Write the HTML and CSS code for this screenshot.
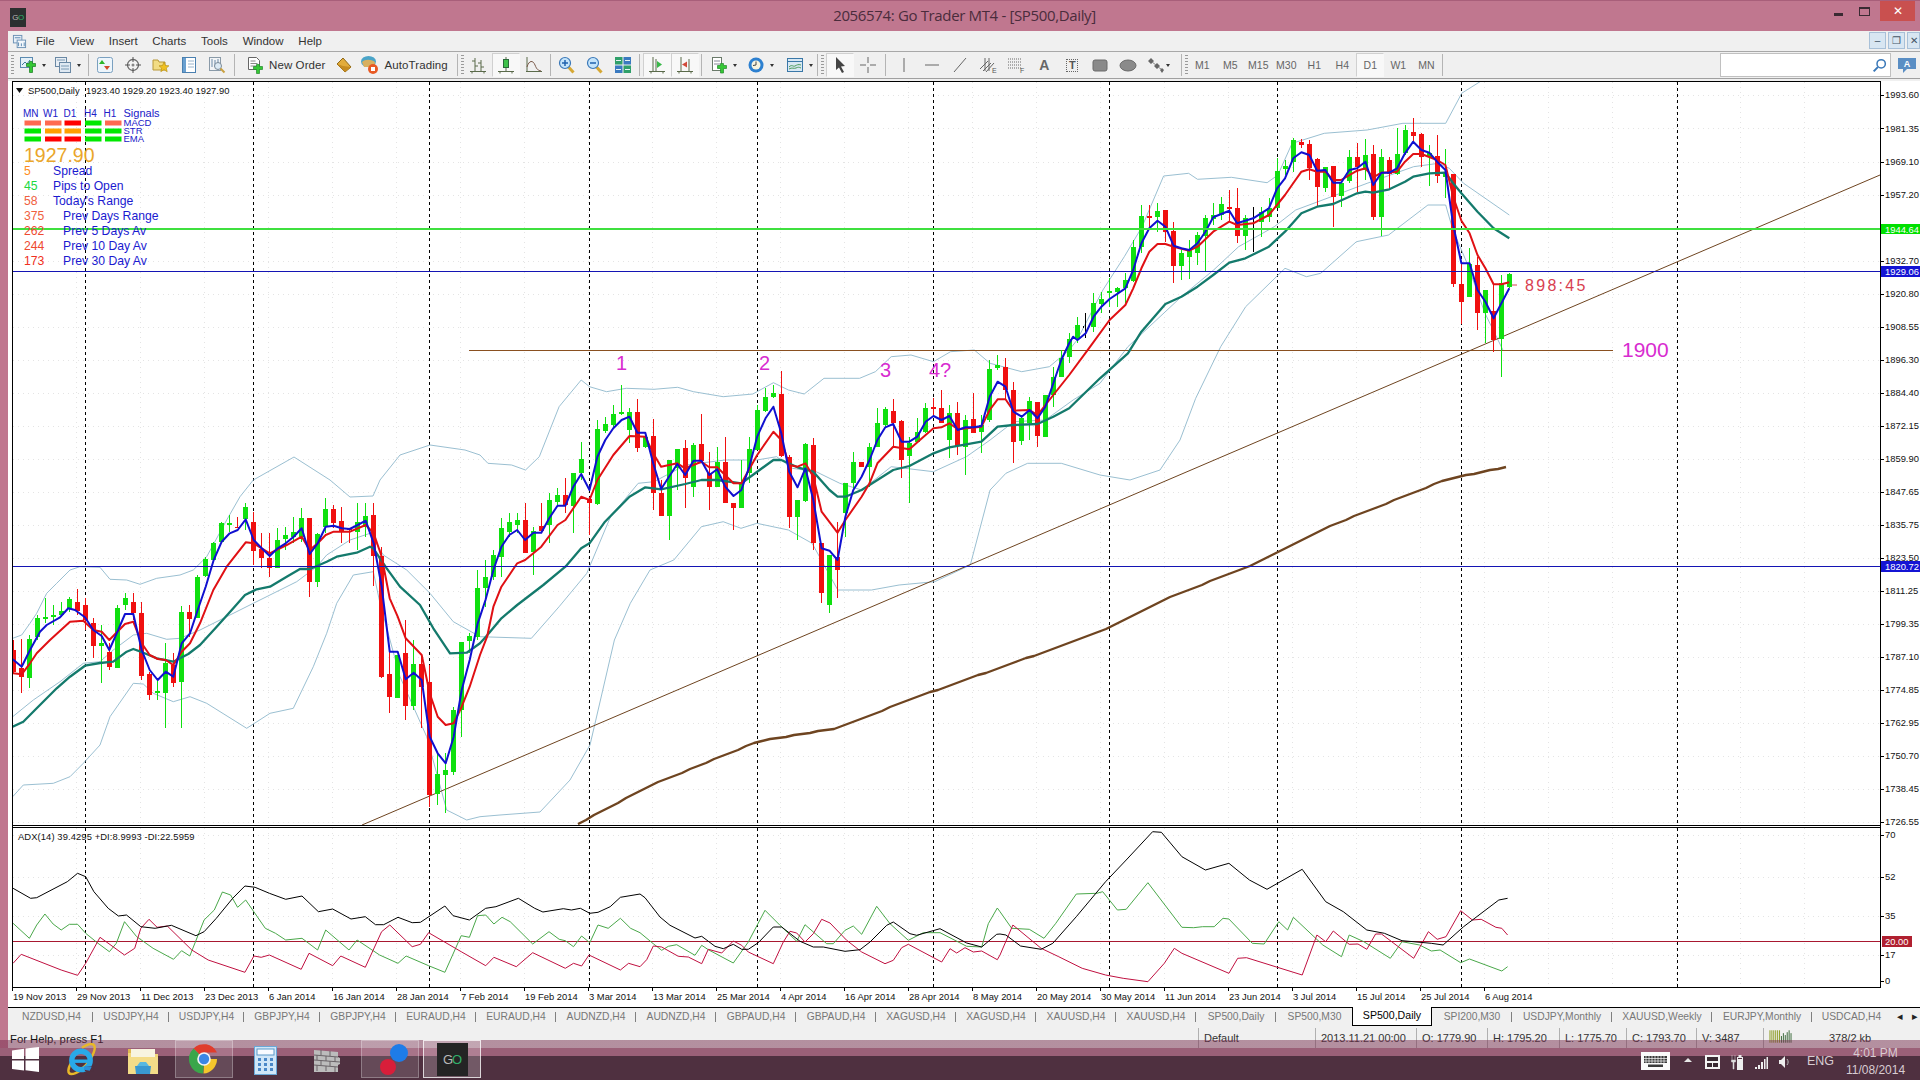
FILE: index.html
```html
<!DOCTYPE html>
<html lang="en">
<head>
<meta charset="utf-8">
<title>2056574: Go Trader MT4 - [SP500,Daily]</title>
<link rel="stylesheet" href="styles.css">
</head>
<body>
<svg class="defs" aria-hidden="true">
  <defs>
    <symbol id="i-new" viewBox="0 0 18 18"><rect x="1.500" y="1.500" width="12" height="10" fill="#e4f0f8" stroke="#5b8ab0"/><path d="M3 9l3-3 2 2 3-4" stroke="#3d7a9a" fill="none"/><path d="M7.500 7.500h3v-2h3v2h3v3h-3v6h-3v-6h-3z" fill="#35c835" stroke="#24862c" stroke-width=".8"/></symbol>
    <symbol id="i-profile" viewBox="0 0 18 18"><rect x="1.500" y="1.500" width="11" height="9" fill="#e8eef4" stroke="#6a88a4"/><rect x="5.500" y="6.500" width="11" height="10" fill="#dfe9f2" stroke="#6a88a4"/><path d="M7 10h8M7 13h8M3 4h8" stroke="#7a9ab4"/></symbol>
    <symbol id="i-market" viewBox="0 0 18 18"><rect x="1.500" y="1.500" width="15" height="15" rx="2" fill="#edf5fb" stroke="#7aa0c0"/><path d="M6 4l3 4H3z" fill="#2cb62c"/><path d="M8 10h6l-3 4z" fill="#d04a2a"/></symbol>
    <symbol id="i-nav" viewBox="0 0 18 18"><circle cx="9" cy="9" r="5.500" fill="#f4f4f4" stroke="#6a6a6a" stroke-width="1.300"/><path d="M9 1v5M9 12v5M1 9h5M12 9h5" stroke="#555"/><circle cx="9" cy="9" r="1.500" fill="#888"/></symbol>
    <symbol id="i-star" viewBox="0 0 18 18"><path d="M1 4h5l1 2h6v8H1z" fill="#f2dc84" stroke="#b89838"/><path d="M12 6l1.500 3.500 3.500.3-2.700 2.300.9 3.600-3.200-2-3.200 2 .9-3.600L7 9.800l3.500-.3z" fill="#f0c020" stroke="#b08a10" stroke-width=".6"/></symbol>
    <symbol id="i-note" viewBox="0 0 18 18"><rect x="2.500" y="1.500" width="13" height="15" fill="#fff" stroke="#4a80b0"/><rect x="3" y="2" width="3" height="14" fill="#6aa0d0"/><path d="M8 5h6M8 8h6M8 11h6" stroke="#9ab4cc"/></symbol>
    <symbol id="i-tester" viewBox="0 0 18 18"><rect x="1.500" y="1.500" width="11" height="13" fill="#f2f4f6" stroke="#8a9aa8"/><path d="M4 3v8M7 4v7M10 3v6" stroke="#6a8aa8"/><circle cx="10" cy="10" r="3.500" fill="#dceaf5" stroke="#7a8a98"/><path d="M12.500 12.500l4 4" stroke="#c9a040" stroke-width="2"/></symbol>
    <symbol id="i-order" viewBox="0 0 18 18"><path d="M2.500 1.500h8l3 3v9h-11z" fill="#fff" stroke="#666"/><path d="M4.500 5h5M4.500 7.500h7M4.500 10h7" stroke="#888"/><path d="M7.500 10.500h3v-2h3v2h3v3h-3v4h-3v-4h-3z" fill="#35c835" stroke="#24862c" stroke-width=".7"/></symbol>
    <symbol id="i-gold" viewBox="0 0 18 18"><path d="M2 8l6-6 8 9-6 5z" fill="#e2ac3c" stroke="#8e6818"/><path d="M2 8l8 8 6-5-8-1z" fill="#c68c22"/></symbol>
    <symbol id="i-auto" viewBox="0 0 20 20"><ellipse cx="8.500" cy="6.500" rx="7.500" ry="5.500" fill="#4aa4c8"/><path d="M2 7c3-3 9-3 13 0l-1 5H4z" fill="#d8b060"/><circle cx="13" cy="14" r="5" fill="#e85a24"/><rect x="11" y="12" width="4" height="4" fill="#fff"/></symbol>
    <symbol id="i-bars" viewBox="0 0 18 18"><path d="M6 2v13M3 5h3M6 10h3M12 4v11M9 7h3M12 11h3M1 15.500h16M3 15.500v2M15 15.500v2" stroke="#5a6a4a" fill="none"/></symbol>
    <symbol id="i-candle" viewBox="0 0 18 18"><path d="M9 1v14M1 15.500h16M3 15.500v2M15 15.500v2" stroke="#5a6a4a" fill="none"/><rect x="6.500" y="3.500" width="5" height="8" fill="#3ec24a" stroke="#2a6a3a"/></symbol>
    <symbol id="i-line" viewBox="0 0 18 18"><path d="M2 1v15M1 15.500h16" stroke="#5a6a4a" fill="none"/><path d="M2 11c2-7 6-7 8-2s3 5 6 6" stroke="#7a5a4a" fill="none"/></symbol>
    <symbol id="i-zin" viewBox="0 0 18 18"><path d="M10.500 11l5 5.500" stroke="#d6a834" stroke-width="3"/><circle cx="7" cy="7" r="5.500" fill="#c4e4fa" stroke="#3a78b8" stroke-width="1.200"/><path d="M4 7h6M7 4v6" stroke="#1f62ae" stroke-width="1.500"/></symbol>
    <symbol id="i-zout" viewBox="0 0 18 18"><path d="M10.500 11l5 5.500" stroke="#d6a834" stroke-width="3"/><circle cx="7" cy="7" r="5.500" fill="#c4e4fa" stroke="#3a78b8" stroke-width="1.200"/><path d="M4 7h6" stroke="#1f62ae" stroke-width="1.500"/></symbol>
    <symbol id="i-tile" viewBox="0 0 18 18"><rect x="1" y="1" width="7.500" height="7.500" fill="#2fa06a"/><rect x="9.500" y="1" width="7.500" height="7.500" fill="#3a7ac0"/><rect x="1" y="9.500" width="7.500" height="7.500" fill="#3a7ac0"/><rect x="9.500" y="9.500" width="7.500" height="7.500" fill="#2fa06a"/><path d="M2 4.500h5M11 4.500h5M2 13.500h5M11 13.500h5" stroke="#e6f2f2"/></symbol>
    <symbol id="i-scroll" viewBox="0 0 18 18"><path d="M5 1v15M1 15.500h16M8 3v12M3 15.500v2M15 15.500v2" stroke="#5a6a4a" fill="none"/><path d="M9 5l5 3.500L9 12z" fill="#38b848"/></symbol>
    <symbol id="i-shift" viewBox="0 0 18 18"><path d="M5 1v15M1 15.500h16M13 3v12M3 15.500v2M15 15.500v2" stroke="#5a6a4a" fill="none"/><path d="M6 8.500l5-3v6z" fill="#d04a3a"/></symbol>
    <symbol id="i-ind" viewBox="0 0 18 18"><rect x="2.500" y="1.500" width="9" height="13" fill="#fff" stroke="#6a7a6a"/><path d="M4 5h6M4 8h6" stroke="#889"/><path d="M7.500 9.500h3v-2h3v2h3v3h-3v4.500h-3V12.500h-3z" fill="#35c835" stroke="#24862c" stroke-width=".7"/></symbol>
    <symbol id="i-clock" viewBox="0 0 18 18"><circle cx="9" cy="9" r="7.500" fill="#2d80d0"/><circle cx="9" cy="9" r="4.500" fill="#f8f4e0"/><path d="M9 5.500V9l-3 .5" stroke="#444" fill="none"/></symbol>
    <symbol id="i-tmpl" viewBox="0 0 18 18"><rect x="1.500" y="2.500" width="15" height="13" fill="#d8e8f4" stroke="#3a78a8"/><path d="M1.500 5.500h15" stroke="#3a78a8"/><path d="M3 11c3-3 4 0 6-1s3-2 6-1M3 13c3-2 5 0 7-1s3-1 5 0" stroke="#4a9a5a" fill="none"/></symbol>
    <symbol id="i-cursor" viewBox="0 0 18 18"><path d="M5 1l9 9-4 .5 3 5.500-2 1-3-5.500L5 14z" fill="#444"/></symbol>
    <symbol id="i-cross" viewBox="0 0 18 18"><path d="M9 1v6M9 11v6M1 9h6M11 9h6" stroke="#666"/></symbol>
    <symbol id="i-vline" viewBox="0 0 18 18"><path d="M9 2v14" stroke="#666"/></symbol>
    <symbol id="i-hline" viewBox="0 0 18 18"><path d="M2 9h14" stroke="#666"/></symbol>
    <symbol id="i-tline" viewBox="0 0 18 18"><path d="M3 16L15 2" stroke="#666"/></symbol>
    <symbol id="i-rect" viewBox="0 0 18 18"><rect x="2" y="4" width="14" height="11" rx="2" fill="#8a8a8a" stroke="#6a6a6a"/></symbol>
    <symbol id="i-ellipse" viewBox="0 0 18 18"><ellipse cx="9" cy="9.500" rx="8" ry="5.500" fill="#8a8a8a" stroke="#6a6a6a"/></symbol>
    <symbol id="i-arrows" viewBox="0 0 18 18"><path d="M4 2l3 3-3 3-3-3zM10 7l3 3-3 3-3-3zM15 12l2 2-2 3-2-3z" fill="#666"/><path d="M5 6l4 3M11 11l3 2" stroke="#888"/></symbol>
    <symbol id="i-search" viewBox="0 0 18 18"><circle cx="11" cy="7" r="5" fill="none" stroke="#3a78b8" stroke-width="1.800"/><path d="M7 11l-5 5" stroke="#3a78b8" stroke-width="2.400"/></symbol>
  </defs>
</svg>

<header class="titlebar">
  <div class="app-icon"><span class="app-g">G</span><span class="app-o">O</span></div>
  <div class="title">2056574: Go Trader MT4 - [SP500,Daily]</div>
  <div class="winctl">
    <span class="wc-min"></span>
    <span class="wc-max"></span>
    <span class="wc-close">✕</span>
  </div>
</header>

<main class="window">
  <nav class="menubar">
    <svg class="menu-doc" viewBox="0 0 16 16"><rect x="1.500" y="1.500" width="9" height="8" fill="#e8f0f8" stroke="#6a90b4"/><rect x="5.500" y="6.500" width="9" height="8" fill="#f4f8fc" stroke="#6a90b4"/><path d="M3 4h6M7 9v4M10 10v3M13 9v4" stroke="#5a88b0"/></svg>
    <span class="m m-file">File</span>
    <span class="m">View</span>
    <span class="m">Insert</span>
    <span class="m">Charts</span>
    <span class="m">Tools</span>
    <span class="m">Window</span>
    <span class="m">Help</span>
    <div class="mdi">
      <span class="mdi-b">–</span>
      <span class="mdi-b">❐</span>
      <span class="mdi-b mdi-last">✕</span>
    </div>
  </nav>

  <div class="toolbar">
    <i class="grip ml3"></i>
    <span class="b b26 ml1"><svg class="i"><use href="#i-new"/></svg></span><i class="caret"></i>
    <span class="b b26 ml4"><svg class="i"><use href="#i-profile"/></svg></span><i class="caret"></i>
    <i class="sep ml7"></i>
    <span class="b ml2"><svg class="i"><use href="#i-market"/></svg></span>
    <span class="b"><svg class="i"><use href="#i-nav"/></svg></span>
    <span class="b"><svg class="i"><use href="#i-star"/></svg></span>
    <span class="b"><svg class="i"><use href="#i-note"/></svg></span>
    <span class="b"><svg class="i"><use href="#i-tester"/></svg></span>
    <i class="sep ml3"></i>
    <span class="tbtn ml11"><svg class="i"><use href="#i-order"/></svg>New Order</span>
    <span class="b ml4"><svg class="i"><use href="#i-gold"/></svg></span>
    <span class="tbtn ml2"><svg class="i i20"><use href="#i-auto"/></svg>AutoTrading</span>
    <i class="sep ml9"></i>
    <i class="grip ml3"></i>
    <span class="b"><svg class="i"><use href="#i-bars"/></svg></span>
    <span class="b on"><svg class="i"><use href="#i-candle"/></svg></span>
    <span class="b"><svg class="i"><use href="#i-line"/></svg></span>
    <i class="sep ml2"></i>
    <span class="b ml2"><svg class="i"><use href="#i-zin"/></svg></span>
    <span class="b"><svg class="i"><use href="#i-zout"/></svg></span>
    <span class="b"><svg class="i"><use href="#i-tile"/></svg></span>
    <i class="sep ml2"></i>
    <span class="b on ml3"><svg class="i"><use href="#i-scroll"/></svg></span>
    <span class="b on"><svg class="i"><use href="#i-shift"/></svg></span>
    <i class="sep ml2"></i>
    <span class="b b26 ml4"><svg class="i"><use href="#i-ind"/></svg></span><i class="caret"></i>
    <span class="b b26 ml6"><svg class="i"><use href="#i-clock"/></svg></span><i class="caret"></i>
    <span class="b b26 ml8"><svg class="i"><use href="#i-tmpl"/></svg></span><i class="caret"></i>
    <i class="sep ml4"></i>
    <i class="grip ml3"></i>
    <span class="b on ml2"><svg class="i"><use href="#i-cursor"/></svg></span>
    <span class="b"><svg class="i"><use href="#i-cross"/></svg></span>
    <i class="sep ml3"></i>
    <span class="b ml4"><svg class="i"><use href="#i-vline"/></svg></span>
    <span class="b"><svg class="i"><use href="#i-hline"/></svg></span>
    <span class="b"><svg class="i"><use href="#i-tline"/></svg></span>
    <span class="b"><svg class="i" viewBox="0 0 18 18"><path d="M1 13l8-8M4 15l8-8M7 16l8-9M6 2v13M10 2v13" stroke="#666" fill="none"/><text x="13" y="17" class="mini">E</text></svg></span>
    <span class="b"><svg class="i" viewBox="0 0 18 18"><path d="M1 3h13M1 6h13M1 9h13M1 12h13" stroke="#666" stroke-dasharray="1 1"/><text x="13" y="17" class="mini">F</text></svg></span>
    <span class="b lett">A</span>
    <span class="b"><span class="tbox">T</span></span>
    <span class="b"><svg class="i"><use href="#i-rect"/></svg></span>
    <span class="b"><svg class="i"><use href="#i-ellipse"/></svg></span>
    <span class="b"><svg class="i"><use href="#i-arrows"/></svg></span><i class="caret cl"></i>
    <i class="sep ml10"></i>
    <i class="grip ml3"></i>
    <span class="b tf">M1</span>
    <span class="b tf">M5</span>
    <span class="b tf">M15</span>
    <span class="b tf">M30</span>
    <span class="b tf">H1</span>
    <span class="b tf">H4</span>
    <span class="b tf on">D1</span>
    <span class="b tf">W1</span>
    <span class="b tf">MN</span>
    <i class="sep ml2"></i>
    <div class="search"><svg class="i s-ic"><use href="#i-search"/></svg></div>
    <svg class="bubble" viewBox="0 0 20 18"><path d="M1 2h18v11h-9l-4 4v-4H1z" fill="#5a8ec4"/><text x="10" y="11" class="bubble-t">A</text></svg>
  </div>

  <svg class="chart" viewBox="8 79 1912 928" xmlns="http://www.w3.org/2000/svg">
    <defs>
      <clipPath id="clip-main"><rect x="13" y="82" width="1867" height="743"/></clipPath>
      <clipPath id="clip-sub"><rect x="13" y="828" width="1867" height="159"/></clipPath>
    </defs>
    <rect class="c-bg" x="8" y="79" width="1912" height="928"/>
    <rect class="c-strip" x="8" y="79" width="1912" height="2"/>
    <g id="grid"></g>
    <g clip-path="url(#clip-main)">
      <g id="bands"></g>
      <path class="ln-1900" d="M469 350.500H1613"/>
      <path class="ln-trend" d="M362 825L1880 175"/>
      <g id="candles"></g>
      <g id="mas"></g>
      <path class="ln-green" d="M13 229H1880"/>
      <path class="ln-blue" d="M13 271.500H1880M13 566.500H1880"/>
      <path class="ln-timer" d="M1512 285H1517"/>
    </g>
    <g clip-path="url(#clip-sub)">
      <path class="ln-level" d="M13 941.500H1880"/>
      <g id="adx"></g>
    </g>
    <path class="frame" d="M12.500 81.500H1880.500V987.500H12.500ZM12.500 825.500H1880.500M12.500 827.500H1880.500"/>
    <path class="frame" id="ticks" d="M1880 95h4M1880 128h4M1880 162h4M1880 195h4M1880 261h4M1880 294h4M1880 327h4M1880 360h4M1880 393h4M1880 426h4M1880 459h4M1880 492h4M1880 525h4M1880 558h4M1880 591h4M1880 624h4M1880 657h4M1880 690h4M1880 723h4M1880 756h4M1880 789h4M1880 822h4M1880 835h4M1880 877h4M1880 916h4M1880 955h4M1880 981h4"/>

    <g class="ax">
      <text x="1885" y="98">1993.60</text><text x="1885" y="131.500">1981.35</text><text x="1885" y="165">1969.10</text><text x="1885" y="198">1957.20</text>
      <text x="1885" y="264">1932.70</text><text x="1885" y="297">1920.80</text><text x="1885" y="330">1908.55</text><text x="1885" y="363">1896.30</text>
      <text x="1885" y="396">1884.40</text><text x="1885" y="429">1872.15</text><text x="1885" y="462">1859.90</text><text x="1885" y="495">1847.65</text>
      <text x="1885" y="528">1835.75</text><text x="1885" y="561">1823.50</text><text x="1885" y="594">1811.25</text><text x="1885" y="627">1799.35</text>
      <text x="1885" y="660">1787.10</text><text x="1885" y="693">1774.85</text><text x="1885" y="726">1762.95</text><text x="1885" y="759">1750.70</text>
      <text x="1885" y="792">1738.45</text><text x="1885" y="825">1726.55</text>
      <text x="1885" y="838">70</text><text x="1885" y="880">52</text><text x="1885" y="919">35</text><text x="1885" y="958">17</text><text x="1885" y="984">0</text>
    </g>

    <rect class="tag-green" x="1881" y="224" width="39" height="10"/><text class="tag-t" x="1885" y="232.500">1944.64</text>
    <rect class="tag-blue" x="1881" y="266" width="39" height="11"/><text class="tag-t" x="1885" y="275">1929.06</text>
    <rect class="tag-blue" x="1881" y="561" width="39" height="11"/><text class="tag-t" x="1885" y="570">1820.72</text>
    <rect class="tag-red" x="1882" y="936" width="30" height="11"/><text class="tag-t" x="1885" y="945">20.00</text>

    <g class="ax">
      <text x="13" y="999.500">19 Nov 2013</text><text x="77" y="999.500">29 Nov 2013</text><text x="141" y="999.500">11 Dec 2013</text><text x="205" y="999.500">23 Dec 2013</text>
      <text x="269" y="999.500">6 Jan 2014</text><text x="333" y="999.500">16 Jan 2014</text><text x="397" y="999.500">28 Jan 2014</text><text x="461" y="999.500">7 Feb 2014</text>
      <text x="525" y="999.500">19 Feb 2014</text><text x="589" y="999.500">3 Mar 2014</text><text x="653" y="999.500">13 Mar 2014</text><text x="717" y="999.500">25 Mar 2014</text>
      <text x="781" y="999.500">4 Apr 2014</text><text x="845" y="999.500">16 Apr 2014</text><text x="909" y="999.500">28 Apr 2014</text><text x="973" y="999.500">8 May 2014</text>
      <text x="1037" y="999.500">20 May 2014</text><text x="1101" y="999.500">30 May 2014</text><text x="1165" y="999.500">11 Jun 2014</text><text x="1229" y="999.500">23 Jun 2014</text>
      <text x="1293" y="999.500">3 Jul 2014</text><text x="1357" y="999.500">15 Jul 2014</text><text x="1421" y="999.500">25 Jul 2014</text><text x="1485" y="999.500">6 Aug 2014</text>
    </g>

    <g class="ax">
      <text x="28" y="93.500">SP500,Daily</text><text x="86" y="93.500">1923.40 1929.20 1923.40 1927.90</text>
      <text class="ax-adx" x="18" y="840">ADX(14) 39.4295 +DI:8.9993 -DI:22.5959</text>
    </g>
    <path class="tri" d="M16 88h7l-3.500 5z"/>

    <g class="sig">
      <text x="23" y="117">MN</text><text x="43" y="117">W1</text><text x="63.500" y="117">D1</text><text x="84" y="117">H4</text><text x="103.500" y="117">H1</text>
    </g>
    <text class="sig-head" x="123.500" y="116.500">Signals</text>
    <g class="sig-row">
      <text x="123.500" y="126">MACD</text><text x="123.500" y="134">STR</text><text x="123.500" y="142">EMA</text>
    </g>
    <g class="bars-sig">
      <rect class="b-sal" x="24.500" y="120.500" width="16.500" height="5"/><rect class="b-sal" x="45" y="120.500" width="16.500" height="5"/><rect class="b-red" x="64.500" y="120.500" width="16.500" height="5"/><rect class="b-lim" x="85" y="120.500" width="16.500" height="5"/><rect class="b-sal" x="105" y="120.500" width="16.500" height="5"/>
      <rect class="b-lim" x="24.500" y="128.500" width="16.500" height="5"/><rect class="b-org" x="45" y="128.500" width="16.500" height="5"/><rect class="b-org" x="64.500" y="128.500" width="16.500" height="5"/><rect class="b-lim" x="85" y="128.500" width="16.500" height="5"/><rect class="b-lim" x="105" y="128.500" width="16.500" height="5"/>
      <rect class="b-lim" x="24.500" y="136.500" width="16.500" height="5"/><rect class="b-red" x="45" y="136.500" width="16.500" height="5"/><rect class="b-red" x="64.500" y="136.500" width="16.500" height="5"/><rect class="b-lim" x="85" y="136.500" width="16.500" height="5"/><rect class="b-lim" x="105" y="136.500" width="16.500" height="5"/>
    </g>
    <text class="big-price" x="24" y="162">1927.90</text>
    <g class="stat">
      <text class="v-org" x="24" y="174.500">5</text><text x="53" y="174.500">Spread</text>
      <text class="v-lim" x="24" y="189.500">45</text><text x="53" y="189.500">Pips to Open</text>
      <text class="v-tom" x="24" y="204.500">58</text><text x="53" y="204.500">Today's Range</text>
      <text class="v-tom" x="24" y="219.500">375</text><text x="63" y="219.500">Prev Days Range</text>
      <text class="v-tom2" x="24" y="234.500">262</text><text x="63" y="234.500">Prev 5 Days Av</text>
      <text class="v-tom2" x="24" y="249.500">244</text><text x="63" y="249.500">Prev 10 Day Av</text>
      <text class="v-red" x="24" y="264.500">173</text><text x="63" y="264.500">Prev 30 Day Av</text>
    </g>

    <g class="note-t">
      <text x="616" y="370">1</text><text x="759" y="370">2</text><text x="880" y="377">3</text><text x="929" y="377">4?</text><text class="note-lg" x="1622" y="357">1900</text>
    </g>
    <text class="timer" x="1525" y="291">898:45</text>
  </svg>

  <div class="tabs">
    <span class="tab">NZDUSD,H4</span>
    <span class="tab">USDJPY,H4</span>
    <span class="tab">USDJPY,H4</span>
    <span class="tab">GBPJPY,H4</span>
    <span class="tab">GBPJPY,H4</span>
    <span class="tab">EURAUD,H4</span>
    <span class="tab">EURAUD,H4</span>
    <span class="tab">AUDNZD,H4</span>
    <span class="tab">AUDNZD,H4</span>
    <span class="tab">GBPAUD,H4</span>
    <span class="tab">GBPAUD,H4</span>
    <span class="tab">XAGUSD,H4</span>
    <span class="tab">XAGUSD,H4</span>
    <span class="tab">XAUUSD,H4</span>
    <span class="tab">XAUUSD,H4</span>
    <span class="tab">SP500,Daily</span>
    <span class="tab tab-plain">SP500,M30</span>
    <span class="tab tab-on">SP500,Daily</span>
    <span class="tab">SPI200,M30</span>
    <span class="tab">USDJPY,Monthly</span>
    <span class="tab">XAUUSD,Weekly</span>
    <span class="tab">EURJPY,Monthly</span>
    <span class="tab tab-plain">USDCAD,H4</span>
    <span class="tab-arrows"><i>◂</i><i>▸</i></span>
  </div>

  <div class="status">
    <span class="s-first">For Help, press F1</span>
    <span class="s-c">Default</span>
    <span class="s-c">2013.11.21 00:00</span>
    <span class="s-c">O: 1779.90</span>
    <span class="s-c">H: 1795.20</span>
    <span class="s-c">L: 1775.70</span>
    <span class="s-c">C: 1793.70</span>
    <span class="s-c">V: 3487</span>
    <span class="s-c s-net">
      <svg class="netbars" viewBox="0 0 24 13"><path d="M1 0v13M3 0v13M5 0v13M7 0v13M9 0v13M11 0v13" stroke="#8a9a20" stroke-width="1"/><path d="M13 6v7M15 3v10M17 5v8M19 2v11M21 0v13M23 3v10" stroke="#3a6a3a" stroke-width="1"/></svg>
      <span class="s-kb">378/2 kb</span>
    </span>
  </div>
</main>

<footer class="taskbar">
  <svg class="tk-win" viewBox="0 0 27 25"><path d="M0 3.500l12-1.700V12H0zM13.500 1.600L27 0v12H13.500zM0 13.500h12v10L0 22zM13.500 13.500H27V25l-13.500-1.800z" fill="#fff"/></svg>
  <svg class="tk-ie" viewBox="0 0 32 34"><path d="M6 20c-4 7-4 12 0 12 5 0 14-6 20-16S31 1 26 1c-3 0-6 2-9 4" fill="none" stroke="#e8b828" stroke-width="2.500"/><circle cx="16" cy="18" r="9.500" fill="none" stroke="#29a9e8" stroke-width="5.500"/><path d="M6 17h20v3.500H6z" fill="#29a9e8"/><path d="M20 24h9v5H20z" fill="#4f3040"/><path d="M20 23.500l7 1-2 4-6-1z" fill="#2a8fd8"/></svg>
  <svg class="tk-folder" viewBox="0 0 32 28"><path d="M1 5h11l2 2h17v20H1z" fill="#f2d678"/><rect x="1" y="2" width="12" height="4" fill="#e0b850"/><rect x="4" y="2" width="24" height="8" fill="#f8f4e0"/><path d="M1 10h30v17H1z" fill="#f4dc88"/><path d="M8 19h16l-1 8H9z" fill="#3a98d0"/><path d="M13 15h6l3 4H10z" fill="#58b8e0"/></svg>
  <span class="tk-btn tk-chrome">
    <svg class="tk-ico" viewBox="0 0 30 30"><path d="M15 15L4.500 4.500A14.500 14.500 0 0 1 28 8.500H15z" fill="#e03c2c"/><path d="M15 15H28a14.500 14.500 0 0 1-13.500 14.500z" fill="#f4c62c"/><path d="M15 15l-1 14.500A14.500 14.500 0 0 1 4.500 4.500z" fill="#3aa64a"/><circle cx="15" cy="15" r="6.800" fill="#f4f4f4"/><circle cx="15" cy="15" r="5.200" fill="#3c86e4"/></svg>
  </span>
  <svg class="tk-calc" viewBox="0 0 23 29"><rect x=".5" y=".5" width="22" height="28" fill="#cfe6f8" stroke="#6aa8d8"/><rect x="3" y="3" width="17" height="6" fill="#f8fbff" stroke="#5a98c8"/><path d="M4 12h3v3H4zM10 12h3v3h-3zM16 12h3v3h-3zM4 17h3v3H4zM10 17h3v3h-3zM16 17h3v3h-3zM4 22h3v3H4zM10 22h3v3h-3zM16 22h3v3h-3z" fill="#4a88c8"/></svg>
  <svg class="tk-wall" viewBox="0 0 28 26"><path d="M2 2l24 2v5l2 1v6l-2 1v7L2 24z" fill="#bcbcbc"/><path d="M2 7l24 2M2 12l26 2M2 17l24 2M9 2v5M18 3v5M5 7v5M14 8v5M23 9v5M9 12v5M18 13v5M5 17v6M14 18v5M23 19v5" stroke="#6a6468" stroke-width="1"/></svg>
  <span class="tk-btn tk-dots">
    <svg class="tk-dotsvg" viewBox="0 0 40 34"><circle cx="29" cy="11" r="9" fill="#1e7ce8"/><circle cx="18" cy="25" r="8" fill="#d81e3a"/></svg>
  </span>
  <span class="tk-btn tk-go">
    <span class="tk-goicon"><span class="app-g">G</span><span class="app-o">O</span></span>
  </span>
  <div class="tray">
    <svg class="tr-kb" viewBox="0 0 29 18"><rect width="29" height="18" fill="#fbfbfb"/><path d="M3 4h23v7H3z" fill="#3a3a3a"/><path d="M5 4v7M8 4v7M11 4v7M14 4v7M17 4v7M20 4v7M23 4v7M3 6.500h23M3 9h23" stroke="#fbfbfb" stroke-width=".7"/><rect x="7" y="12.500" width="15" height="2.500" fill="#3a3a3a"/></svg>
    <i class="tr-up"></i>
    <svg class="tr-box" viewBox="0 0 15 14"><rect width="15" height="14" fill="#f4f4f4"/><rect x="2" y="2" width="11" height="4" fill="#3a2a32"/><rect x="2" y="8" width="5" height="4" fill="#3a2a32"/><rect x="8" y="8" width="5" height="4" fill="#3a2a32"/></svg>
    <svg class="tr-pow" viewBox="0 0 12 17"><path d="M1 1v5M4 1v5M.5 6h4v2H3v7H2V8H.5z" fill="#ddd" stroke="#ddd" stroke-width=".5"/><rect x="6.500" y="3.500" width="5" height="12" fill="none" stroke="#eee"/><rect x="7.500" y="1" width="3" height="2.500" fill="#eee"/><rect x="7" y="5" width="4" height="10" fill="#eee"/></svg>
    <svg class="tr-sig" viewBox="0 0 13 12"><path d="M0 10h2v2H0zM3 8h2v4H3zM6 5h2v7H6zM9 2h1.500v10H9zM11.500 0H13v12h-1.500z" fill="#eee"/></svg>
    <svg class="tr-snd" viewBox="0 0 11 14"><path d="M0 5h2l4-4v12L2 9H0z" fill="#eee"/><path d="M8 4c1.500 2 1.500 4 0 6" stroke="#bbb" fill="none"/></svg>
    <span class="tr-lang">ENG</span>
    <span class="tr-clock"><span>4:01 PM</span><span>11/08/2014</span></span>
  </div>
</footer>
<script src="chart.js"></script>
</body>
</html>
```

FILE: styles.css
```css
* { box-sizing: border-box; }
html, body { margin: 0; padding: 0; }
body {
  width: 1920px; height: 1080px; overflow: hidden; position: relative;
  background: #c0778f;
  display: flex; flex-direction: column;
  font-family: "Liberation Sans", Arial, sans-serif;
  color: #222;
}
.defs { position: absolute; width: 0; height: 0; }

/* title bar */
.titlebar {
  height: 31px; flex: none; position: relative;
  display: flex; align-items: flex-start;
  border-top: 1px solid #a85f7a;
  padding-left: 10px;
}
.app-icon {
  width: 16px; height: 19px; margin-top: 7px; background: #2c2f2f;
  font-size: 8px; line-height: 19px; text-align: center; letter-spacing: -.5px; overflow: hidden;
}
.app-g { color: #b8b8b8; }
.app-o { color: #31b06a; }
.title {
  position: absolute; left: 0; right: 0; top: 4px; padding-left: 9px;
  text-align: center; font: 15px "Open Sans", "Liberation Sans", sans-serif; color: #4a2c3c;
  letter-spacing: -.35px;
}
.winctl { margin-left: auto; display: flex; align-items: flex-start; height: 21px; margin-right: 5px; }
.wc-min { width: 9px; height: 3px; background: #3a2a32; margin: 12px 16px 0 0; }
.wc-max { width: 11px; height: 9px; border: 1px solid #3a2a32; border-top-width: 2px; margin: 6px 10px 0 0; }
.wc-close { width: 35px; height: 20px; background: #c9504f; color: #fff; font-size: 12px; line-height: 20px; text-align: center; }

.window { margin-left: 8px; flex: 1; display: flex; flex-direction: column; min-height: 0; }

/* menu */
.menubar {
  height: 21px; flex: none; display: flex; align-items: center;
  background: #f0f0f0; border-bottom: 1px solid #a8a8a8; padding-left: 4px;
  font-size: 11.500px; color: #333; position: relative;
}
.menu-doc { width: 15px; height: 15px; }
.m { padding: 0 7.400px; }
.m-file { margin-left: 6px; padding-left: 3px; }
.mdi { margin-left: auto; display: flex; gap: 2px; align-self: flex-start; margin-top: 1px; }
.mdi-b {
  width: 17px; height: 17px; background: #d8e6f2; border: 1px solid #a8c0d8;
  font-size: 10px; line-height: 15px; text-align: center; color: #456;
}
.mdi-last { width: 13px; overflow: hidden; }

/* toolbar */
.toolbar {
  height: 27px; flex: none; display: flex; align-items: center;
  background: #f0f0f0; border-bottom: 1px solid #a0a0a0;
  font-size: 11.500px; color: #333;
}
.grip { width: 3px; height: 20px; flex: none; background: repeating-linear-gradient(#9a9a9a 0 1px, transparent 1px 3px); }
.sep { width: 1px; height: 22px; flex: none; background: #b4b4b4; }
.caret { width: 0; height: 0; flex: none; border: 2.500px solid transparent; border-top: 3px solid #333; border-bottom: 0; margin: 0 .5px; }
.cl { margin-left: -4px; }
.b { width: 28px; height: 24px; flex: none; display: flex; align-items: center; justify-content: center; }
.b26 { width: 26px; }
.on { background: #f8f8f8; border: 1px solid #d0d0d0; border-right-color: #f8f8f8; border-bottom-color: #f8f8f8; }
.i { width: 18px; height: 18px; flex: none; }
.i20 { width: 20px; height: 20px; }
.tbtn { display: flex; align-items: center; gap: 5px; white-space: nowrap; flex: none; letter-spacing: .1px; }
.lett { font-size: 14px; font-weight: bold; color: #666; }
.tbox { width: 12px; height: 13px; border: 1px dotted #666; font: bold 11px/11px "Liberation Sans", sans-serif; color: #555; text-align: center; }
.mini { font: 7px "Liberation Sans", sans-serif; fill: #555; }
.tf { font-size: 10.500px; color: #666; }
.search { margin-left: 277px; width: 171px; height: 24px; background: #fff; border: 1px solid #c0c0c0; display: flex; align-items: center; justify-content: flex-end; padding-right: 3px; }
.s-ic { width: 15px; height: 15px; }
.bubble { width: 20px; height: 18px; margin-left: 6px; flex: none; }
.bubble-t { font: bold 9px "Liberation Sans", sans-serif; fill: #fff; text-anchor: middle; }
.ml1 { margin-left: 1px; } .ml2 { margin-left: 2px; } .ml3 { margin-left: 3px; } .ml4 { margin-left: 4px; }
.ml6 { margin-left: 6px; } .ml7 { margin-left: 7px; } .ml8 { margin-left: 8px; } .ml9 { margin-left: 9.500px; }
.ml10 { margin-left: 10.500px; } .ml11 { margin-left: 11px; }

/* chart */
.chart { width: 1912px; height: 928px; flex: none; display: block; }
.c-bg { fill: #fff; }
.c-strip { fill: #f0f0f0; }
.frame { fill: none; stroke: #000; stroke-width: 1; shape-rendering: crispEdges; }
.g-v { stroke: #000; stroke-width: 1; stroke-dasharray: 3 3; shape-rendering: crispEdges; }
.g-d { stroke: #e4e4e4; stroke-width: 1; stroke-dasharray: 1 4; shape-rendering: crispEdges; }
.ln-1900 { stroke: #8a5020; stroke-width: 1; shape-rendering: crispEdges; }
.ln-trend { stroke: #6e4420; stroke-width: 1; fill: none; }
.ln-green { stroke: #3fe03f; stroke-width: 1.500; shape-rendering: crispEdges; }
.ln-blue { stroke: #1414b4; stroke-width: 1; shape-rendering: crispEdges; }
.ln-level { stroke: #a81830; stroke-width: 1; shape-rendering: crispEdges; }
.ln-timer { stroke: #d84050; stroke-width: 1; }
.ma { fill: none; stroke-linejoin: round; }
.ma-teal { stroke: #147a6c; stroke-width: 2.300; }
.ma-blue { stroke: #1010d0; stroke-width: 2; }
.ma-red { stroke: #e01014; stroke-width: 2; }
.ma-200 { stroke: #6e4420; stroke-width: 2.400; }
.bb { fill: none; stroke: #8fb8cc; stroke-width: .9; }
.di { fill: none; stroke-width: 1; stroke-linejoin: round; }
.di-k { stroke: #000; }
.di-g { stroke: #4aa84a; }
.di-r { stroke: #c01040; }
.candle { shape-rendering: crispEdges; }

.ax text { font: 9.400px "Liberation Sans", sans-serif; fill: #111; }
.ax .ax-adx { letter-spacing: .1px; }
.tri { fill: #111; }
.tag-green { fill: #00e000; }
.tag-blue { fill: #1414d4; }
.tag-red { fill: #b02030; }
.tag-t { font: 9.400px "Liberation Sans", sans-serif; fill: #fff; }
.sig text { font: 10px "Liberation Sans", sans-serif; fill: #2020c8; }
.sig-head { font: 11px "Liberation Sans", sans-serif; fill: #2020c8; }
.sig-row text { font: 9.500px "Liberation Sans", sans-serif; fill: #2020c8; }
.b-sal { fill: #ff6a50; } .b-red { fill: #f00; } .b-lim { fill: #00e800; } .b-org { fill: #ffa000; }
.big-price { font: 19.500px "Liberation Sans", sans-serif; fill: #eaa62a; }
.stat text { font: 12.200px "Liberation Sans", sans-serif; fill: #1a1ad0; }
.stat .v-org { fill: #ff8c20; } .stat .v-lim { fill: #20d840; } .stat .v-tom { fill: #f06040; }
.stat .v-tom2 { fill: #ee4a30; } .stat .v-red { fill: #f03020; }
.note-t text { font: 20px "Liberation Sans", sans-serif; fill: #d82cd0; }
.note-t .note-lg { font-size: 21px; }
.timer { font: 16px "Liberation Sans", sans-serif; fill: #d84050; letter-spacing: 2.300px; }

/* tabs */
.tabs {
  height: 20px; flex: none; background: #f0f0f0; border-top: 1px solid #000;
  display: grid; align-items: center;
  grid-template-columns: 85px 76px 75px 76px 76px 80px 80px 80px 80px 80px 80px 80px 80px 80px 80px 80px 76px 80px 80px 100px 100px 100px 78px 1fr;
  font-size: 10.300px; color: #777;
}
.tab { height: 10px; line-height: 10px; border-right: 1px solid #808080; text-align: center; white-space: nowrap; margin-bottom: 2px; padding-left: 1px; }
.tab:first-child { padding-left: 3px; }
.tab-plain { border-right: 0; }
.tab-on {
  height: 19px; line-height: 17px; margin: -1px 0 0; background: #fff; color: #000; padding: 0;
  border: 1px solid #000; border-top: 0; align-self: start; font-size: 10.600px;
}
.tab-arrows { display: flex; justify-content: space-between; padding: 0 2px 2px 7px; color: #222; font-size: 11px; }
.tab-arrows i { font-style: normal; }

/* status */
.status {
  flex: 1; background: #f0f0f0; padding-top: 1px;
  display: grid; grid-template-columns: 1190px 117px 101px 71px 72px 67px 70px 67px 1fr;
  align-items: start; font-size: 11px; color: #333; white-space: nowrap;
}
.s-first { padding: 5px 0 0 2px; color: #111; font-size: 11.300px; }
.s-c { height: 20px; border-left: 1px solid #b0b0b0; padding: 4px 0 0 5px; }
.s-net { display: flex; padding: 0 0 0 5px; align-items: flex-start; }
.netbars { width: 23px; height: 13px; margin-top: 2px; flex: none; }
.s-kb { margin-left: 37px; padding-top: 4px; }

/* taskbar */
.taskbar {
  position: absolute; left: 0; right: 0; bottom: 0; height: 40px;
  display: flex; align-items: stretch;
  background:
    linear-gradient(to bottom,
      rgba(120,48,80,.5) 0 8px,
      #9b6078 8px 16px,
      #4f3040 16px 40px);
  color: #e4d8de;
}
.taskbar > svg { flex: none; align-self: flex-start; }
.tk-win { width: 27px; height: 25px; margin: 7px 0 0 12px; }
.tk-ie { width: 32px; height: 33px; margin: 3px 0 0 26px; }
.tk-folder { width: 32px; height: 28px; margin: 7px 0 0 30px; }
.tk-btn { flex: none; display: flex; align-items: center; justify-content: center; height: 38px; width: 58px; background: rgba(255,255,255,.13); border: 1px solid rgba(255,255,255,.28); }
.tk-chrome { margin-left: 16px; }
.tk-ico { width: 30px; height: 30px; }
.tk-calc { width: 23px; height: 29px; margin: 6px 0 0 21px; }
.tk-wall { width: 28px; height: 26px; margin: 8px 0 0 35px; }
.tk-dots { margin-left: 21px; }
.tk-dotsvg { width: 40px; height: 34px; margin-left: 0; }
.tk-go { margin-left: 4px; border: 1px solid rgba(255,255,255,.75); background: rgba(255,255,255,.2); }
.tk-goicon { width: 31px; height: 33px; background: #242424; font: 13px/33px "Liberation Sans", sans-serif; text-align: center; letter-spacing: -1px; }
.tray { margin-left: auto; display: flex; align-items: flex-start; position: relative; padding-right: 15px; }
.tray > svg { flex: none; }
.tr-kb { width: 29px; height: 18px; margin-top: 12px; }
.tr-up { width: 0; height: 0; border: 4px solid transparent; border-bottom: 4px solid #e8e8e8; border-top: 0; margin: 18px 0 0 14px; }
.tr-box { width: 15px; height: 14px; margin: 15px 0 0 13px; }
.tr-pow { width: 12px; height: 17px; margin: 14px 0 0 11px; }
.tr-sig { width: 13px; height: 12px; margin: 17px 0 0 12px; }
.tr-snd { width: 11px; height: 14px; margin: 15px 0 0 11px; }
.tr-lang { font-size: 12.500px; margin: 14px 0 0 17px; width: 26px; color: #d8ccd2; }
.tr-clock { display: flex; flex-direction: column; align-items: center; margin: 6px 0 0 13px; font-size: 12px; row-gap: 3px; line-height: 14px; width: 59px; color: #d8ccd2; }
```

FILE: chart.js
```js
// Chart data: coordinates were read off the price pane, and are mapped into page pixels.
const g = '#10e010', r = '#f01010', k = '#000';
const NS = 'http://www.w3.org/2000/svg';

const candlesA = [[480,510,575,580,r],[478,565,590,640,r],[465,478,593,625,g],[405,415,470,480,g],[355,410,416,430,g],[375,405,412,435,g],[365,393,405,410,g],[350,358,385,395,g],[327,365,392,405,r],[355,376,420,450,r],[415,428,497,535,r],[435,490,497,610,g],[490,515,562,570,r],[375,385,565,565,g],[338,355,375,390,g],[338,365,400,420,r],[365,400,587,600,r],[575,583,645,660,r],[595,633,640,660,g],[490,548,638,745,g],[520,555,608,620,r],[378,397,605,745,g],[375,395,417,470,r],[285,290,413,415,g],[230,238,288,290,g],[185,190,240,243,g],[125,130,185,190,g],[105,128,134,155,g],[110,140,142,145,r],[70,80,118,150,g],[95,125,212,255,r],[160,207,235,265,r],[160,235,263,290,r],[145,180,265,265,g],[140,165,178,210,g],[110,155,170,190,g],[85,115,170,185,g],[115,115,307,350,r],[160,162,305,322,g],[55,88,140,160,g],[75,88,128,145,r],[80,123,155,190,r],[145,145,150,190,r],[70,125,155,210,g],[70,108,140,170,g],[70,105,228,318,r],[200,228,590,595,r],[515,583,650,700,r],[525,525,655,655,g],[420,520,678,720,r],[480,552,678,690,g],[525,552,620,745,r],[555,607,945,980,r],[820,882,942,975,g],[820,870,885,1000,g],[680,690,875,885,g],[485,485,690,770,g],[460,468,484,520,g],[270,325,470,480,g]];
const candlesB = [[660,710,745,800,g],[630,645,710,720,g],[535,565,650,710,g],[520,545,575,590,g],[520,540,555,580,g],[488,540,638,640,r],[560,573,635,705,g],[488,558,572,575,r],[460,480,555,610,g],[445,465,487,495,g],[415,465,495,520,r],[400,400,497,580,g],[305,357,400,420,g],[470,477,490,585,r],[240,267,493,495,g],[230,252,272,280,g],[195,222,255,262,g],[135,216,220,225,g],[205,216,270,310,g],[178,216,323,335,r],[285,290,322,325,g],[238,288,458,510,r],[420,458,527,528,r],[360,360,527,600,g],[328,328,385,450,g],[300,325,415,505,r],[310,315,440,470,g],[222,312,362,365,r],[335,400,440,510,r],[320,365,440,440,g],[290,365,490,490,r],[490,489,503,570,r],[360,430,503,505,g],[290,328,400,430,g],[195,210,330,330,g],[145,170,212,215,g],[135,160,172,175,g],[92,163,347,350,r],[345,350,530,565,r],[480,480,530,600,g],[310,312,483,485,g],[295,315,610,630,r],[610,610,758,790,r],[645,645,795,820,g],[547,650,690,775,r],[430,430,520,590,g],[335,365,430,450,g],[367,367,380,382,r],[310,322,380,440,g],[205,250,320,320,g],[200,208,255,260,g],[178,213,248,320,r],[240,243,360,415,r],[290,310,348,490,g],[235,275,305,310,g],[190,205,275,280,g],[175,202,206,230,r],[150,205,248,250,r],[195,218,300,355,g],[185,218,318,345,r],[225,240,320,405,g],[160,238,278,280,r],[225,255,275,340,g],[60,88,240,245,g],[45,75,85,90,g],[55,80,150,180,r],[125,150,305,368,r],[225,235,303,315,g],[170,183,250,300,g],[185,185,288,320,r],[165,165,290,290,g],[80,112,165,200,g],[30,55,112,112,g]];
const candlesC = [[700,718,770,790,g],[650,675,715,730,g],[640,678,682,715,k],[580,610,680,695,g],[575,598,612,640,g],[535,573,580,620,g],[560,565,575,620,g],[520,540,565,610,g],[420,440,542,545,g],[315,348,440,460,g],[315,348,352,380,r],[310,333,350,395,g],[330,330,395,425,r],[365,393,497,548,r],[450,458,497,540,g],[420,450,470,537,g],[395,405,458,495,g],[345,355,407,515,g],[310,345,357,375,g],[290,312,345,360,g],[270,322,328,365,r],[265,325,407,430,r],[345,355,408,450,g],[322,353,357,455,k],[320,335,365,410,g],[295,325,352,365,g],[175,212,325,325,g],[180,197,207,225,g],[115,120,185,215,g],[118,125,135,145,r],[120,132,205,240,r],[175,178,262,320,r],[200,200,265,275,g],[198,198,290,382,r],[245,250,287,320,g],[150,172,242,250,g],[130,172,200,275,r],[118,165,210,240,g],[135,163,350,360,r],[148,172,352,408,g],[170,180,222,265,r],[85,162,222,225,g],[75,90,160,165,g],[55,95,107,125,r],[100,103,170,200,r],[135,160,172,258,g],[105,168,228,248,r],[148,220,230,295,g],[223,223,553,562,r],[490,552,605,672,r],[445,492,590,590,g],[470,495,640,690,r],[570,570,640,730,g],[555,632,720,755,r],[525,550,718,830,g],[518,522,562,565,g]];

const z7 = (x, y) => [x / 3, 480 + y / 3];
const z8 = (x, y) => [480 + x / 2.529, 340 + y / 3];
const z9 = (x, y) => [1060 + x / 2.8, 100 + y / 3];
const z3 = (x, y) => [1280 + x / 2.45, y / 3];
const abs = (x, y) => [x, y];
const s10 = (x, y) => [x / 2.45, 820 + y / 3];
const s12 = (x, y) => [620 + x / 3, 827 + y / 3];
const s11 = (x, y) => [1000 + x / 1.704, 820 + y / 3];

function el(tag, cls, attrs) {
  const e = document.createElementNS(NS, tag);
  if (cls) e.setAttribute('class', cls);
  for (const a in attrs) e.setAttribute(a, attrs[a]);
  return e;
}

function poly(parent, cls, parts) {
  const out = [];
  let last = -Infinity;
  parts.forEach(([f, arr]) => {
    for (let i = 0; i < arr.length; i += 2) {
      const [x, y] = f(arr[i], arr[i + 1]);
      if (x > last) { out.push(x.toFixed(1) + ',' + y.toFixed(1)); last = x; }
    }
  });
  parent.appendChild(el('polyline', cls, { points: out.join(' ') }));
}

// sample a knot list once per bar, snapped to whole pixels, as the terminal plots a moving average
function perBar(knots) {
  const flat = [];
  for (let x = knots[0]; x <= knots[knots.length - 2]; x += 8) {
    let i = 0;
    while (knots[i + 2] < x) i += 2;
    const t = (x - knots[i]) / (knots[i + 2] - knots[i]);
    flat.push(x, Math.round(knots[i + 1] + t * (knots[i + 3] - knots[i + 1])));
  }
  return flat;
}

// grid
const grid = document.getElementById('grid');
for (let i = 0; i < 29; i++) {
  const x = 12.5 + 64 * i;
  grid.appendChild(el('path', 'g-d', { d: `M${x} 82V825M${x} 828V987` }));
  if (i < 24) grid.appendChild(el('path', 'frame', { d: `M${x} 987v4` }));
}
[95,128,162,195,261,294,327,360,393,426,459,492,525,558,591,624,657,690,723,756,789,822,835,877,916,955].forEach(y => {
  grid.appendChild(el('path', 'g-d', { d: `M13 ${y + .5}H1880` }));
});
[85,253,429,589,757,933,1109,1277,1461,1677].forEach(x => {
  grid.appendChild(el('path', 'g-v', { d: `M${x + .5} 82V825M${x + .5} 828V987` }));
});

// candles
const cg = document.getElementById('candles');
function drawCandles(list, start, by) {
  list.forEach((c, i) => {
    const n = start + i, cx = 13.5 + 8 * n;
    const Y = v => by + v / 3;
    cg.appendChild(el('rect', 'candle', { x: cx - .5, y: Y(c[0]), width: 1, height: Y(c[3]) - Y(c[0]), fill: c[4] }));
    cg.appendChild(el('rect', 'candle', { x: cx - 2.5, y: Y(c[1]), width: c[4] === k ? 1 : 5, height: Math.max(1.5, Y(c[2]) - Y(c[1])), fill: c[4] }));
  });
}
drawCandles(candlesA, 0, 480);
drawCandles(candlesB, 59, 340);
drawCandles(candlesC, 132, 100);

// bollinger
const bands = document.getElementById('bands');
poly(bands, 'bb', [
  [z7, [38,475,65,465,90,430,110,400,140,340,170,310,210,270,240,260,300,262,330,298,380,300,420,313,470,295,540,285,580,270,620,230,680,120,720,50,760,0]],
  [abs, [294,457,330,480,350,497,373,496,380,480,400,455,430,445,465,450]],
  [z8, [0,345,20,370,80,375,115,390,150,350,200,200,256,120,277,140,320,155,370,145,440,148,500,142,540,155,615,170,690,162,742,128,780,150,820,162,870,115,960,115,1000,95,1040,50,1090,45,1147,65,1190,35,1250,30,1290,70,1370,95,1440,80,1490,30,1510,0]],
  [z9, [120,570,180,470,230,380,290,228,360,220,385,238,480,232,580,248,610,225,650,130,740,100,860,90,960,70,1080,70,1115,0]],
  [z3, [445,280,490,245]]
]);
poly(bands, 'bb', [
  [z7, [38,710,100,660,180,605,250,550,300,545,340,510,400,465,440,460,500,478,540,475,600,450,660,420,760,370,890,305,950,260,980,225,1050,180,1110,160,1150,225,1220,270,1290,340,1360,425,1440,470]],
  [z8, [0,885,130,895,200,800,270,700,330,530,400,430,440,425,520,375,620,360,700,360,750,350,790,385,850,395,910,430,965,450,1040,380,1147,395,1230,350,1290,300,1350,245,1430,240,1500,180,1568,130]],
  [z9, [190,740,340,590,430,510,500,440,600,380,660,330,760,290,860,250,990,200,1060,190,1090,205,1130,250,1258,345]]
]);
poly(bands, 'bb', [
  [z7, [38,950,70,915,160,910,210,890,250,850,300,795,330,710,400,610,430,612,460,640,520,665,570,650,620,670,740,745,810,700,880,685,940,560,980,460,1010,370,1060,285,1120,275,1140,370,1200,590,1280,770,1340,990,1400,1020,1440,1010]],
  [abs, [500,815,540,812,570,780,590,745]],
  [z8, [340,900,380,790,430,690,490,660,560,560,615,545,660,565,700,550,780,570,840,610,905,750,990,750,1060,735,1150,725,1240,675,1290,450,1330,400,1385,370,1470,370,1568,405]],
  [abs, [1130,480,1160,470,1180,440]],
  [z9, [380,895,450,740,520,620,630,505,690,530,730,520,830,425,920,405,1030,315,1080,315,1100,390,1140,490,1190,640,1240,750]]
]);

// moving averages
const mas = document.getElementById('mas');
poly(mas, 'ma ma-200', [[abs, perBar([578,824,649,786,759,741,833,729,931,692,1016,662,1102,631,1163,600,1249,566,1335,524,1445,480,1510,466])]]);
poly(mas, 'ma ma-teal', [
  [z7, [38,740,70,725,110,685,170,625,210,590,255,557,300,549,340,545,380,515,400,507,430,518,470,535,520,545,565,522,600,495,650,440,700,385,735,345,770,328,810,320,860,290,900,267,930,267,980,245,1010,230,1070,218,1110,200,1120,205,1160,265,1200,320,1260,375,1300,445,1350,520,1400,518,1440,490]],
  [z8, [15,890,54,835,94,795,160,735,216,680,256,625,277,610,316,545,378,470,418,442,458,448,519,432,560,420,600,420,661,430,701,395,742,360,762,360,803,382,843,395,884,450,904,470,924,470,965,450,1005,420,1045,390,1086,378,1147,340,1187,322,1268,305,1309,260,1349,255,1410,252,1450,230,1490,205,1568,115]],
  [z9, [190,760,228,695,295,612,340,590,385,560,429,525,474,488,519,475,585,440,630,395,676,340,720,320,765,312,832,280,855,275,877,278,922,268,966,245,989,230,1034,220,1079,218,1101,250,1124,280,1169,335,1214,385,1258,415]]
]);
poly(mas, 'ma ma-red', [
  [z7, [38,580,65,583,90,550,110,520,150,480,210,425,250,422,280,450,305,455,328,480,375,432,400,425,425,490,449,525,473,537,497,540,520,555,545,515,570,490,600,430,640,330,680,260,737,187,761,190,809,220,860,195,905,170,929,210,953,190,977,165,1001,155,1050,155,1097,135,1121,160,1145,230,1169,355,1193,410,1217,475,1265,525,1289,640,1313,710,1337,735,1361,730,1385,680,1409,620,1440,525]],
  [z8, [18,890,34,800,54,740,94,670,114,660,155,620,196,555,216,540,256,470,277,480,297,420,337,345,378,288,418,290,438,340,458,380,499,370,519,385,560,365,580,382,600,382,641,430,661,430,701,345,742,275,762,300,782,375,803,380,823,370,843,410,864,515,904,578,924,540,965,470,985,430,1005,370,1045,320,1086,328,1127,285,1147,265,1167,262,1187,250,1208,268,1268,260,1289,210,1309,178,1329,178,1349,212,1390,210,1410,225,1450,165,1490,105,1540,25]],
  [z9, [139,660,183,615,205,565,228,505,250,455,273,432,295,432,318,440,362,452,385,440,429,395,474,365,496,375,541,370,585,345,630,285,653,250,676,215,698,208,720,215,743,215,765,240,787,240,832,212,855,205,877,232,900,218,944,215,966,185,989,162,1012,162,1056,180,1079,195,1101,290,1124,362,1147,400,1169,465,1191,505,1214,553,1236,553,1258,547]]
]);
poly(mas, 'ma ma-blue', [
  [z7, [38,538,65,560,90,510,120,455,140,435,180,412,205,385,225,390,255,412,280,450,305,468,328,510,350,460,375,402,400,402,425,510,449,570,473,600,497,575,520,590,545,490,570,460,593,390,617,320,641,240,665,185,689,160,713,150,737,118,761,180,785,205,809,228,833,205,857,190,881,170,905,145,929,222,953,190,977,140,1001,137,1025,145,1049,147,1073,135,1097,122,1121,190,1145,320,1169,515,1193,515,1217,598,1241,578,1265,600,1289,770,1313,820,1337,850,1361,770,1385,630,1409,540,1433,430,1440,410]],
  [z8, [14,780,34,690,54,620,74,585,94,570,114,600,135,578,155,578,175,535,196,497,216,497,236,440,256,402,277,450,297,350,317,300,337,265,358,240,378,230,398,278,418,278,438,370,458,447,478,410,499,372,519,405,540,362,560,362,580,405,600,388,620,440,641,468,661,450,681,380,701,290,722,235,742,200,762,280,782,395,803,442,823,385,843,480,864,625,884,632,904,660,924,530,944,450,965,410,985,360,1005,300,1025,262,1045,252,1066,305,1086,305,1106,290,1127,245,1147,228,1167,240,1187,228,1208,270,1228,262,1248,262,1268,258,1289,170,1309,125,1329,140,1349,215,1370,230,1390,210,1410,235,1430,200,1450,130,1470,60,1490,10,1500,-10]],
  [z9, [49,720,72,700,94,650,116,620,139,597,183,565,205,510,228,430,250,385,273,362,295,380,318,437,340,445,362,450,385,430,407,395,429,352,474,332,496,370,541,355,585,325,608,265,630,235,653,175,676,157,698,165,720,212,743,210,765,248,787,248,810,210,832,205,855,185,877,255,900,218,922,218,944,205,966,160,989,125,1012,150,1034,158,1056,185,1079,210,1101,375,1124,490,1147,490,1169,570,1191,605,1214,655,1236,610,1258,565]]
]);

// ADX pane
const adx = document.getElementById('adx');
poly(adx, 'di di-g', [
  [s10, [32,310,72,355,90,315,110,282,130,312,150,330,170,313,190,313,210,340,240,370,268,395,285,370,305,305,335,350,375,385,425,418,445,392,465,408,500,300,525,270,545,216,565,225,582,262,602,240,650,325,675,340,700,360,740,355,778,390,798,330,855,390,875,360,930,405,975,430,995,408,1050,437,1090,457,1130,347,1150,352,1170,287,1190,285,1210,312,1230,292,1250,305,1305,372,1345,335,1370,358,1385,362,1405,380,1425,348,1445,368,1465,315,1490,325,1520,295,1545,325,1568,338]],
  [s12, [25,300,55,313,100,350,125,370,145,358,170,353,225,385,245,355,265,368,340,408,385,345,435,250,480,295,530,343,555,293,620,350,640,350,675,310,700,297,725,322,770,238,810,290,865,340,910,317,960,317,1040,358,1085,360,1105,290,1132,243]],
  [s11, [0,275,20,325,50,328,75,355,95,310,130,222,165,220,175,215,200,270,215,268,252,188,310,322,330,323,345,320,365,320,380,295,390,297,430,370,450,372,475,305,490,330,500,292,550,375,582,410,595,345,620,365,665,415,685,365,715,375,735,393,750,390,785,428,800,417,855,453,865,440]]
]);
poly(adx, 'di di-r', [
  [s10, [32,430,52,403,150,450,190,466,210,430,245,352,305,405,330,385,345,325,365,298,385,322,410,318,470,390,510,420,600,457,622,408,640,412,660,405,738,448,757,400,815,437,835,408,895,442,935,335,955,315,1010,380,1030,373,1050,338,1130,395,1190,437,1210,412,1265,440,1305,398,1385,445,1405,430,1425,438,1443,405,1520,450,1540,430,1568,440]],
  [s12, [28,408,50,418,80,398,100,357,125,360,175,388,205,390,245,410,265,367,305,378,340,342,365,355,385,375,460,410,490,345,510,313,530,318,555,345,580,320,605,277,630,288,680,340,725,375,795,410,820,400,845,362,865,352,965,405,990,365,1010,378,1035,362,1060,375,1085,372,1132,398]],
  [s11, [0,405,22,315,70,385,100,410,140,445,180,465,210,475,252,485,280,430,297,385,310,400,390,460,405,415,420,413,515,465,540,345,555,365,568,333,595,373,610,372,625,388,640,342,650,342,705,415,730,335,745,358,760,350,785,272,805,300,820,298,845,322,855,325,865,345]]
]);
poly(adx, 'di di-k', [
  [s10, [32,205,75,235,90,233,165,185,190,160,210,170,230,215,265,265,290,288,310,285,345,320,380,325,420,316,480,347,500,335,530,295,570,235,600,198,625,202,660,220,700,238,740,228,780,275,815,267,860,297,895,290,920,314,940,314,975,292,1010,308,1030,307,1090,258,1110,287,1150,300,1190,265,1215,260,1270,235,1310,265,1330,276,1380,266,1400,270,1422,265,1445,280,1465,277,1495,260,1520,232,1568,222]],
  [s12, [25,208,50,202,75,212,120,270,150,295,225,333,245,328,285,358,310,365,340,352,365,367,385,367,415,347,460,300,485,300,540,343,580,360,610,360,675,373,720,368,750,345,800,295,820,285,870,320,890,325,960,305,1040,348,1085,360,1130,322]],
  [s11, [0,342,10,345,35,378,70,388,90,370,130,290,180,185,215,120,260,35,275,37,310,110,350,150,390,130,425,180,455,208,515,148,555,245,585,275,625,330,655,340,685,362,735,370,755,375,790,320,850,240,865,235]]
]);
```
